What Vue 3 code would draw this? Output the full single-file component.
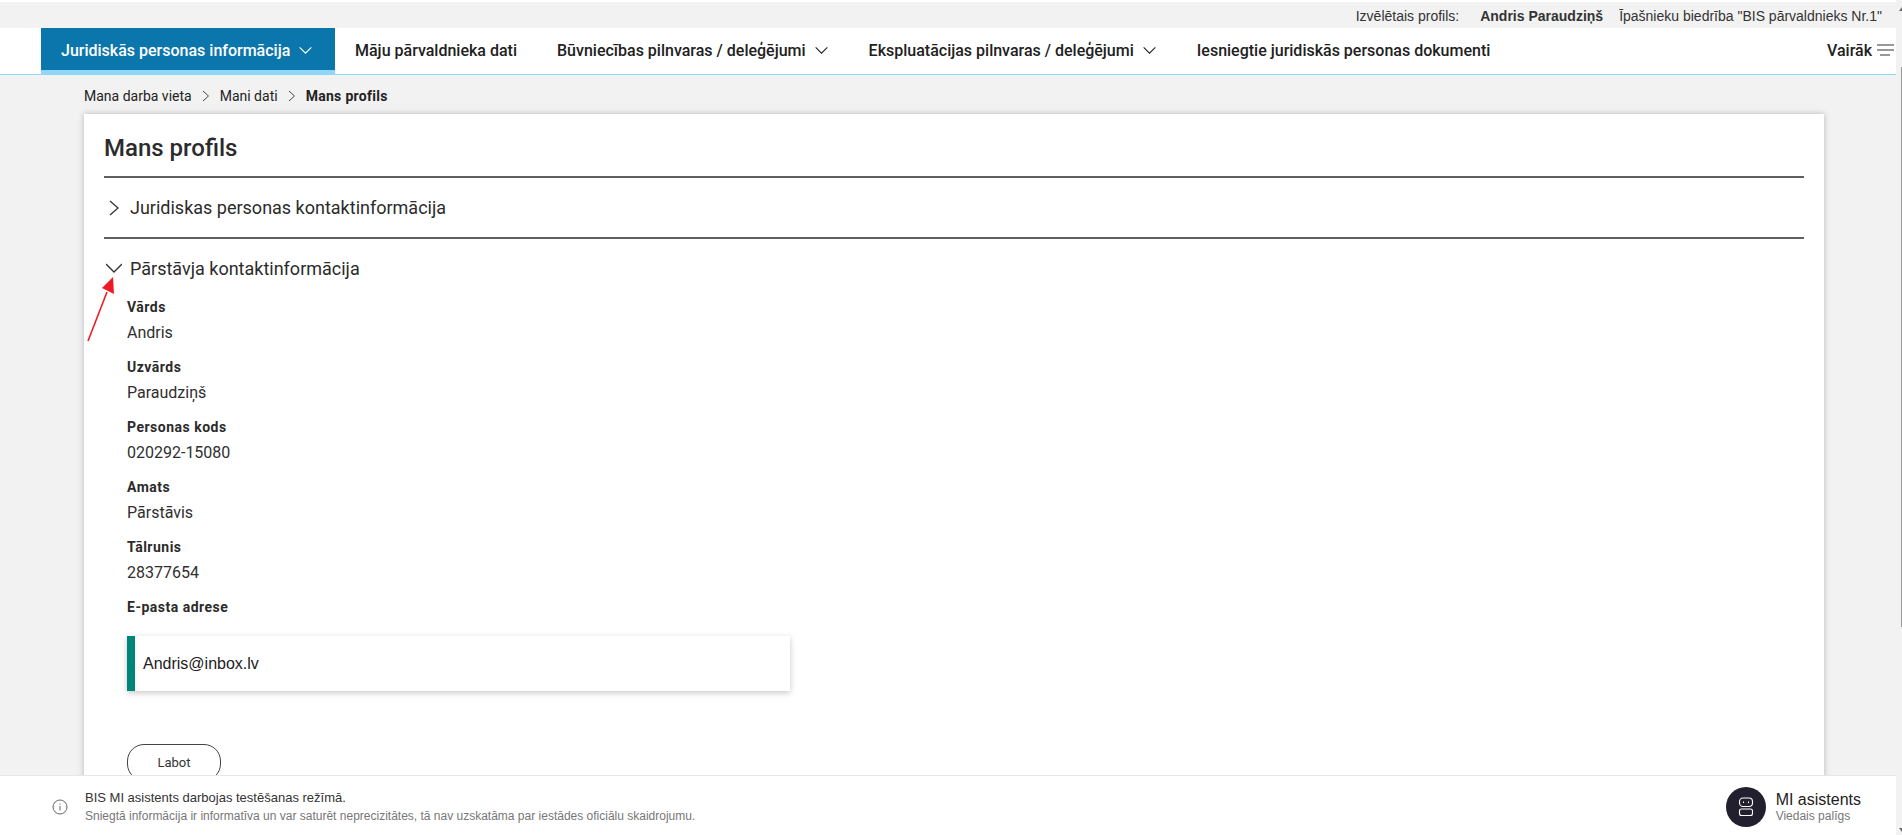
<script setup>
const nav = [
  { label: 'Māju pārvaldnieka dati', chevron: false },
  { label: 'Būvniecības pilnvaras / deleģējumi', chevron: true },
  { label: 'Ekspluatācijas pilnvaras / deleģējumi', chevron: true },
  { label: 'Iesniegtie juridiskās personas dokumenti', chevron: false },
]
const fields = [
  { label: 'Vārds', value: 'Andris' },
  { label: 'Uzvārds', value: 'Paraudziņš' },
  { label: 'Personas kods', value: '020292-15080' },
  { label: 'Amats', value: 'Pārstāvis' },
  { label: 'Tālrunis', value: '28377654' },
]
</script>

<template>
  <div class="page">
    <div class="topbar">
      <span>Izvēlētais profils:</span>
      <b class="who">Andris Paraudziņš</b>
      <span>Īpašnieku biedrība "BIS pārvaldnieks Nr.1"</span>
    </div>
    <nav class="nav">
      <a class="item active">
        Juridiskās personas informācija
        <svg class="chev" viewBox="0 0 16 10"><path d="M1.5 1.5 8 8l6.5-6.5" /></svg>
      </a>
      <a v-for="n in nav" :key="n.label" class="item">
        {{ n.label }}
        <svg v-if="n.chevron" class="chev" viewBox="0 0 16 10"><path d="M1.5 1.5 8 8l6.5-6.5" /></svg>
      </a>
      <a class="more">
        Vairāk
        <svg class="burger" viewBox="0 0 17 12"><path d="M0 1h17M0 6h17M3 11h10" /></svg>
      </a>
    </nav>
    <div class="crumbs">
      <span>Mana darba vieta</span>
      <svg class="sep" viewBox="0 0 8 12"><path d="M1 1l5.5 5L1 11" /></svg>
      <span>Mani dati</span>
      <svg class="sep" viewBox="0 0 8 12"><path d="M1 1l5.5 5L1 11" /></svg>
      <b>Mans profils</b>
    </div>
    <main class="card">
      <h1>Mans profils</h1>
      <section class="acc first">
        <svg class="acc-ic" viewBox="0 0 16 16"><path d="M4 1l8 7-8 7" /></svg>
        <span>Juridiskas personas kontaktinformācija</span>
      </section>
      <section class="acc">
        <svg class="acc-ic" viewBox="0 0 16 16"><path d="M0 4l8 8 8-8" /></svg>
        <span>Pārstāvja kontaktinformācija</span>
      </section>
      <div class="fields">
        <div v-for="f in fields" :key="f.label" class="field">
          <div class="lab">{{ f.label }}</div>
          <div class="val">{{ f.value }}</div>
        </div>
        <div class="lab">E-pasta adrese</div>
        <div class="mail">Andris@inbox.lv</div>
        <button class="btn">Labot</button>
      </div>
    </main>
    <svg class="arrow" viewBox="0 0 44 76">
      <path d="M8 71 27 22" stroke="#ed1c24" stroke-width="1.600" fill="none" />
      <path d="M33 7 22 18 34 24z" fill="#ed1c24" />
    </svg>
    <footer class="foot">
      <svg class="info" viewBox="0 0 16 16"><circle cx="8" cy="8" r="7" /><path d="M8 7v4.500M8 4.500v1.200" /></svg>
      <div class="foot-text">
        <div class="f1">BIS MI asistents darbojas testēšanas režīmā.</div>
        <div class="f2">Sniegtā informācija ir informatīva un var saturēt neprecizitātes, tā nav uzskatāma par iestādes oficiālu skaidrojumu.</div>
      </div>
      <div class="bot">
        <span class="bot-ic">
          <svg viewBox="0 0 16 20"><rect x="1.500" y="1" width="13" height="8.500" rx="3.500" /><rect x="1.500" y="12" width="13" height="6.500" rx="2" /><path d="M5.500 4.500v1.500M10.500 4.500v1.500" /></svg>
        </span>
        <div>
          <div class="b1">MI asistents</div>
          <div class="b2">Viedais palīgs</div>
        </div>
      </div>
    </footer>
    <div class="scroll"><i class="up"></i><i class="thumb"></i><i class="down"></i></div>
  </div>
</template>

<style>
html, body { margin: 0; height: 100%; overflow: hidden; background: #fff; }
</style>

<style scoped>
.page {
  position: relative;
  height: 835px;
  overflow: hidden;
  padding-top: 2px;
  box-sizing: border-box;
  background: linear-gradient(#fff 2px, #f2f2f2 2px);
  font-family: Roboto, "Liberation Sans", sans-serif;
  color: #212121;
}
.topbar {
  height: 26px;
  padding: 2px 20px 0 0;
  box-sizing: border-box;
  display: flex;
  justify-content: flex-end;
  align-items: center;
  font-family: "Liberation Sans", Arial, sans-serif;
  font-size: 14px;
  color: #333;
}
.who { margin: 0 16px 0 21px; }
.nav {
  height: 47px;
  box-sizing: border-box;
  background: #fff;
  border-bottom: 1px solid #8fd7f7;
  display: flex;
  padding-left: 41px;
  padding-right: 2px;
  margin-right: 6px;
}
.item {
  height: 46px;
  display: flex;
  align-items: center;
  padding: 0 20px 2px;
  font-size: 16px;
  font-weight: 500;
  white-space: nowrap;
  box-sizing: border-box;
}
.active {
  background: #0b76ab;
  color: #fff;
  border-bottom: 5px solid #8fd7f7;
  padding-top: 2px;
  padding-bottom: 0;
  width: 294px;
  height: 47px;
}
.chev { width: 15px; height: 9px; margin-left: 8px; fill: none; stroke: currentColor; stroke-width: 1.200; flex: none; }
.more { margin-left: auto; display: flex; align-items: center; padding-bottom: 2px; font-size: 16px; font-weight: 500; }
.burger { width: 17px; height: 12px; margin-left: 5px; fill: none; stroke: #333; stroke-width: 1.200; }
.crumbs {
  height: 39px;
  padding: 3px 0 0 84px;
  box-sizing: border-box;
  display: flex;
  align-items: center;
  gap: 10px;
  font-size: 14px;
  color: #222;
}
.crumbs b { letter-spacing: .3px; }
.sep { width: 8px; height: 12px; fill: none; stroke: #444; stroke-width: 1; }
.card {
  margin: 0 78px 0 84px;
  height: 760px;
  background: #fff;
  box-shadow: 0 0 6px rgba(0,0,0,.25);
  padding: 0 20px;
}
h1 {
  margin: 0;
  height: 64px;
  box-sizing: border-box;
  padding-top: 20px;
  font-size: 24px;
  line-height: 29px;
  font-weight: 500;
  color: #2b2b2b;
  border-bottom: 2px solid #5f5f5f;
}
.acc {
  height: 58px;
  display: flex;
  align-items: center;
  font-size: 18px;
  color: #2b2b2b;
  box-sizing: border-box;
}
.first { border-bottom: 2px solid #5f5f5f; height: 61px; }
.acc-ic { width: 16px; height: 16px; margin: 0 0 0 2px; fill: none; stroke: #333; stroke-width: 1.300; flex: none; }
.acc span { margin-left: 8px; }
.fields { padding-left: 23px; margin-top: -2px; }
.field { height: 60px; }
.lab { font-size: 14px; font-weight: 700; line-height: 20px; color: #2b2b2b; padding-top: 2px; letter-spacing: .5px; }
.val { font-size: 16px; line-height: 20px; margin-top: 6px; color: #2f2f2f; }
.mail {
  margin-top: 19px;
  width: 647px;
  height: 55px;
  border-left: 8px solid #00857a;
  display: flex;
  align-items: center;
  padding-left: 8px;
  font-family: "Liberation Sans", Arial, sans-serif;
  font-size: 16px;
  background: #fff;
  box-shadow: 0 2px 6px rgba(0,0,0,.22);
}
.btn {
  margin-top: 53px;
  display: block;
  width: 94px;
  height: 37px;
  border: 1px solid #444;
  border-radius: 17px;
  background: #fff;
  font-family: inherit;
  font-size: 13px;
  color: #333;
}
.arrow { position: absolute; left: 80px; top: 270px; width: 44px; height: 76px; }
.foot {
  position: absolute;
  left: 0;
  right: 6px;
  bottom: 0;
  height: 60px;
  box-sizing: border-box;
  padding-top: 3px;
  background: #fff;
  border-top: 1px solid #e6e6e6;
  display: flex;
  align-items: center;
}
.info { width: 16px; height: 16px; margin-left: 52px; fill: none; stroke: #666; stroke-width: 1; }
.foot-text { margin-left: 17px; }
.f1 { font-size: 13px; line-height: 18px; color: #333; font-family: "Liberation Sans", Arial, sans-serif; }
.f2 { font-size: 12px; line-height: 18px; color: #777; font-family: "Liberation Sans", Arial, sans-serif; }
.bot { margin-left: auto; display: flex; align-items: center; margin-right: 35px; }
.bot-ic { width: 40px; height: 40px; border-radius: 50%; background: #221f2e; display: flex; align-items: center; justify-content: center; margin-right: 10px; }
.bot-ic svg { width: 16px; height: 20px; fill: none; stroke: #fff; stroke-width: 1.100; }
.b1 { font-family: "Liberation Sans", Arial, sans-serif; font-size: 16px; line-height: 18px; color: #222; }
.b2 { font-family: "Liberation Sans", Arial, sans-serif; font-size: 12px; line-height: 14px; color: #777; }
.scroll { position: absolute; right: 0; top: 0; bottom: 0; width: 6px; background: #f2f2f2; }
.up, .down { position: absolute; left: 3px; width: 0; height: 0; border-left: 3px solid transparent; border-right: 3px solid transparent; }
.up { top: 7px; border-bottom: 4px solid #666; }
.down { bottom: 3px; border-top: 4px solid #666; }
.thumb { position: absolute; left: 5px; right: 0; top: 67px; height: 560px; background: #999; }
</style>
